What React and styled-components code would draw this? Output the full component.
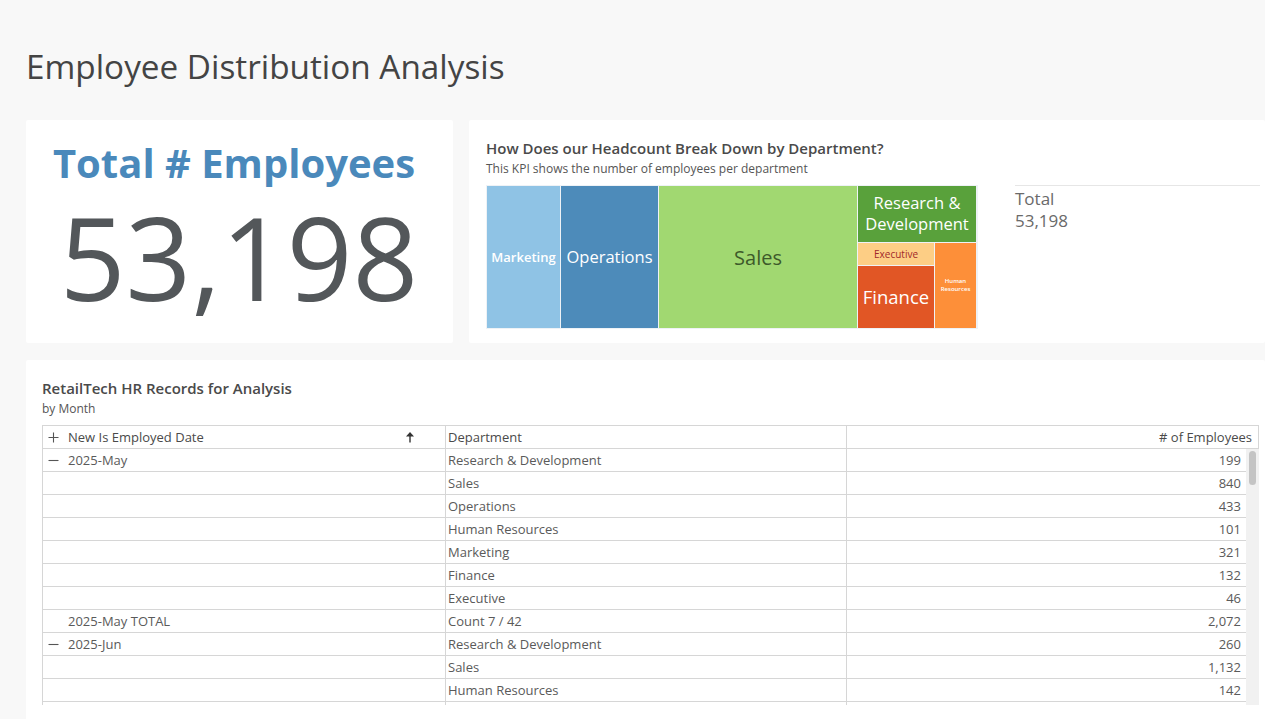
import React from "react";
import styled, { createGlobalStyle } from "styled-components";

const Global = createGlobalStyle`
  html, body { margin: 0; padding: 0; }
  body {
    background: #f8f8f8;
    font-family: "Open Sans", "Liberation Sans", sans-serif;
    color: #555;
    overflow: hidden;
    height: 719px;
  }
`;

const Page = styled.div`
  padding: 44px 0 0 26px;
  height: 719px;
  box-sizing: border-box;
  overflow: hidden;
`;

const PageTitle = styled.h1`
  margin: 0 0 32px 0;
  font-size: 33.3px;
  line-height: 44px;
  font-weight: 400;
  color: #444;
`;

const TopRow = styled.div`
  display: grid;
  grid-template-columns: 427px 1fr;
  gap: 16px;
  height: 223px;
`;

const Card = styled.div`
  background: #fff;
  border-radius: 2px;
  box-sizing: border-box;
`;

const KpiCard = styled(Card)`
  display: flex;
  flex-direction: column;
  align-items: center;
  padding-top: 17px;
`;

const KpiLabel = styled.div`
  font-size: 40px;
  font-weight: 700;
  color: #4a89bb;
  line-height: 52px;
  margin-left: -11px;
`;

const KpiValue = styled.div`
  font-size: 115px;
  line-height: 136px;
  color: #53575a;
  margin-left: -1px;
`;

const ChartCard = styled(Card)`
  padding: 18px 0 0 17px;
`;

const CardTitle = styled.div`
  font-size: 15px;
  font-weight: 600;
  line-height: 20px;
  color: #4a4a4a;
`;

const CardSub = styled.div`
  font-size: 12px;
  line-height: 16px;
  color: #555;
  margin-top: 3px;
`;

const ChartRow = styled.div`
  display: flex;
  margin-top: 8px;
`;

const Treemap = styled.div`
  display: flex;
  flex: none;
  gap: 1px;
  padding: 1px;
  width: 492px;
  height: 144px;
  box-sizing: border-box;
  background: #eef2f6;
`;

const Col = styled.div`
  display: flex;
  flex-direction: column;
  gap: 1px;
  width: ${(p) => p.$w}px;
  flex: none;
`;

const Row = styled.div`
  display: flex;
  gap: 1px;
  flex: 1;
`;

const Tile = styled.div`
  display: flex;
  align-items: center;
  justify-content: center;
  text-align: center;
  background: ${(p) => p.$bg};
  color: ${(p) => p.$fg || "#fff"};
  font-size: ${(p) => p.$fs}px;
  font-weight: ${(p) => p.$fw || 400};
  line-height: 1.25;
  width: ${(p) => (p.$w ? p.$w + "px" : "auto")};
  height: ${(p) => (p.$h ? p.$h + "px" : "auto")};
  flex: ${(p) => (p.$w || p.$h ? "none" : 1)};
`;

const Legend = styled.div`
  margin-left: 37px;
  flex: 1;
  border-top: 1px solid #e6e6e6;
  padding-top: 2px;
  margin-right: 5px;
  height: 60px;
`;

const LegendText = styled.div`
  font-size: 17px;
  line-height: 22px;
  color: #6a6a6a;
`;

const TableCard = styled(Card)`
  margin-top: 17px;
  padding: 18px 6px 0 16px;
  height: 400px;
`;

const TableWrap = styled.div`
  margin-top: 8px;
  position: relative;
`;

const Grid = styled.div`
  display: grid;
  grid-template-columns: 403px 401px 1fr;
  border-left: 1px solid #d6d6d6;
  border-top: ${(p) => (p.$head ? "1px solid #d6d6d6" : "none")};
`;

const BodyClip = styled.div`
  height: 256px;
  overflow: hidden;
  position: relative;
`;

const Cell = styled.div`
  height: 22px;
  line-height: 22px;
  font-size: 13px;
  color: ${(p) => (p.$head ? "#4a4a4a" : "#5a5a5a")};
  border-right: 1px solid #d6d6d6;
  border-bottom: 1px solid #d6d6d6;
  padding: 0 ${(p) => (p.$num ? (p.$head ? 6 : 17) : 3)}px 0 ${(p) => (p.$first ? 4 : 2)}px;
  display: flex;
  align-items: center;
  justify-content: ${(p) => (p.$num ? "flex-end" : "flex-start")};
  white-space: nowrap;
  overflow: hidden;
`;

const Toggle = styled.span`
  width: 21px;
  flex: none;
  display: flex;
  align-items: center;
  justify-content: flex-start;
  padding-left: 1px;
  box-sizing: border-box;
`;

const HeadLabel = styled.span`
  flex: 1;
`;

const SortArrow = styled.svg`
  width: 10px;
  height: 12px;
  margin-right: 27px;
  flex: none;
`;

const ScrollTrack = styled.div`
  position: absolute;
  right: 0;
  top: 0;
  width: 13px;
  height: 100%;
  background: #f1f1f1;
`;

const ScrollThumb = styled.div`
  position: absolute;
  left: 3px;
  top: 2px;
  width: 7px;
  height: 34px;
  border-radius: 4px;
  background: #c4c4c4;
`;

const Plus = () => (
  <svg width="11" height="11" viewBox="0 0 11 11">
    <path d="M5.5 0.5v10M0.5 5.5h10" stroke="#555" strokeWidth="1.1" />
  </svg>
);

const Minus = () => (
  <svg width="11" height="11" viewBox="0 0 11 11">
    <path d="M0.5 5.5h10" stroke="#555" strokeWidth="1.1" />
  </svg>
);

const rows = [
  [true, "2025-May", "Research & Development", "199"],
  [false, "", "Sales", "840"],
  [false, "", "Operations", "433"],
  [false, "", "Human Resources", "101"],
  [false, "", "Marketing", "321"],
  [false, "", "Finance", "132"],
  [false, "", "Executive", "46"],
  [false, "2025-May TOTAL", "Count 7 / 42", "2,072"],
  [true, "2025-Jun", "Research & Development", "260"],
  [false, "", "Sales", "1,132"],
  [false, "", "Human Resources", "142"],
  [false, "", "", ""],
];

export default function App() {
  return (
    <>
      <Global />
      <Page>
        <PageTitle>Employee Distribution Analysis</PageTitle>
        <TopRow>
          <KpiCard>
            <KpiLabel>Total # Employees</KpiLabel>
            <KpiValue>53,198</KpiValue>
          </KpiCard>
          <ChartCard>
            <CardTitle>How Does our Headcount Break Down by Department?</CardTitle>
            <CardSub>This KPI shows the number of employees per department</CardSub>
            <ChartRow>
              <Treemap>
                <Tile $w={73} $bg="#8fc3e5" $fs={13} $fw={600}>Marketing</Tile>
                <Tile $w={97} $bg="#4d8bba" $fs={16.5}>Operations</Tile>
                <Tile $w={198} $bg="#a1d871" $fs={20} $fg="#3d5a2a">Sales</Tile>
                <Col $w={118}>
                  <Tile $h={56} $bg="#59a13b" $fs={16.5}>Research &amp;<br />Development</Tile>
                  <Row>
                    <Col $w={76}>
                      <Tile $h={22} $bg="#fdce85" $fs={10} $fg="#a0282a">Executive</Tile>
                      <Tile $bg="#e15625" $fs={18.5}>Finance</Tile>
                    </Col>
                    <Tile $bg="#fd8f39" $fs={6} $fw={600}>Human<br />Resources</Tile>
                  </Row>
                </Col>
              </Treemap>
              <Legend>
                <LegendText>Total</LegendText>
                <LegendText>53,198</LegendText>
              </Legend>
            </ChartRow>
          </ChartCard>
        </TopRow>
        <TableCard>
          <CardTitle>RetailTech HR Records for Analysis</CardTitle>
          <CardSub>by Month</CardSub>
          <TableWrap>
            <Grid $head>
              <Cell $head $first>
                <Toggle><Plus /></Toggle>
                <HeadLabel>New Is Employed Date</HeadLabel>
                <SortArrow viewBox="0 0 10 12">
                  <path d="M5 11.5V2" stroke="#333" strokeWidth="1.4" />
                  <path d="M1 5.5L5 1L9 5.5Z" fill="#333" />
                </SortArrow>
              </Cell>
              <Cell $head>Department</Cell>
              <Cell $head $num># of Employees</Cell>
            </Grid>
            <BodyClip>
              <Grid>
                {rows.map((r, i) => (
                  <React.Fragment key={i}>
                    <Cell $first>
                      <Toggle>{r[0] ? <Minus /> : null}</Toggle>
                      {r[1]}
                    </Cell>
                    <Cell>{r[2]}</Cell>
                    <Cell $num>{r[3]}</Cell>
                  </React.Fragment>
                ))}
              </Grid>
              <ScrollTrack>
                <ScrollThumb />
              </ScrollTrack>
            </BodyClip>
          </TableWrap>
        </TableCard>
      </Page>
    </>
  );
}
